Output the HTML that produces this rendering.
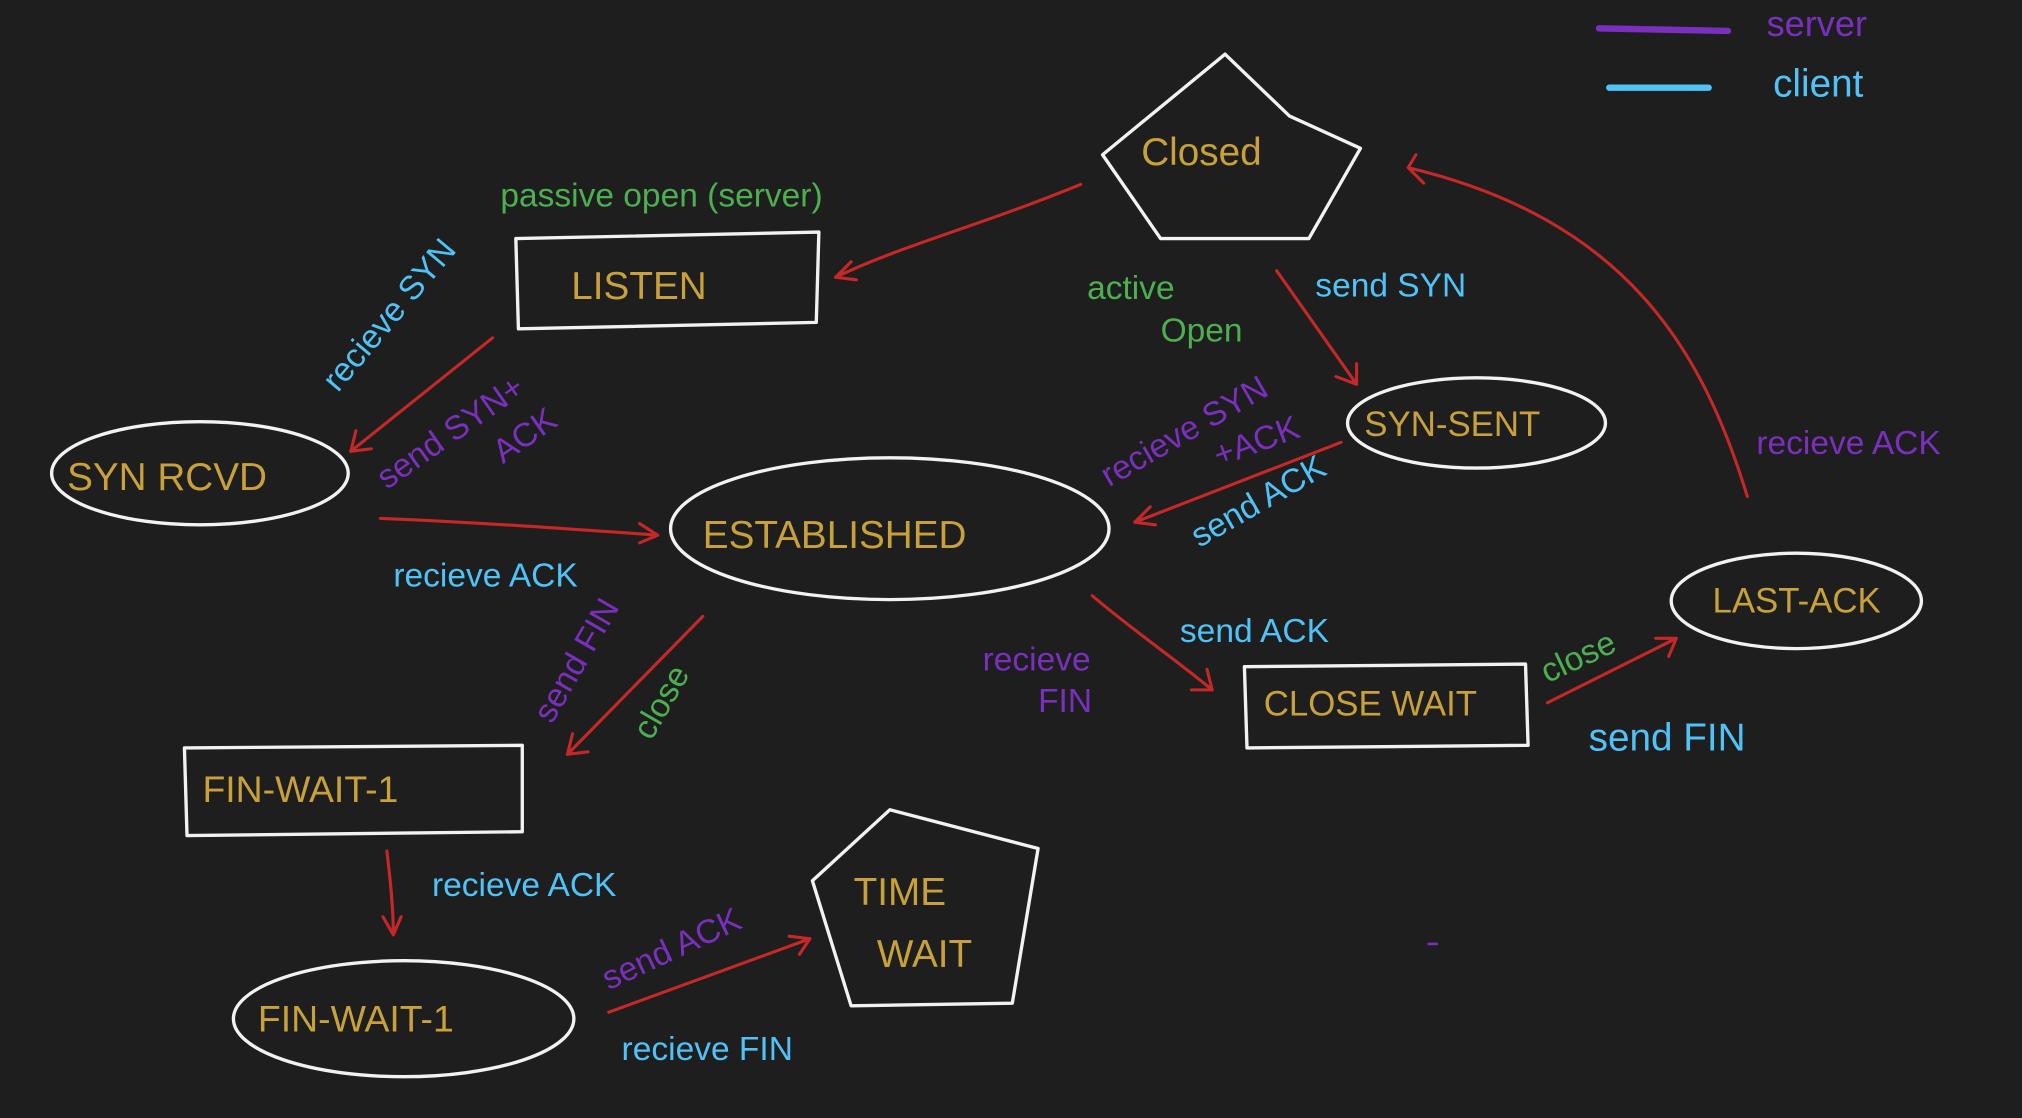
<!DOCTYPE html>
<html><head><meta charset="utf-8"><style>
html,body{margin:0;padding:0;background:#1e1e1e;width:2022px;height:1118px;overflow:hidden}
svg{display:block}
text{font-family:"Liberation Sans","DejaVu Sans",sans-serif}
.y{fill:#c9a13a;font-size:30px}
.g{fill:#4caf50;font-size:26px}
.b{fill:#4fc3f7;font-size:26px}
.p{fill:#7b2fbe;font-size:26px}
.w{fill:none;stroke:#f2f2f2;stroke-width:2.6;stroke-linejoin:round}
.r{fill:none;stroke:#c62828;stroke-width:2.4;stroke-linecap:round}
</style></head><body>
<svg width="2022" height="1118" viewBox="0 0 1568 867">
<rect width="1568" height="867" fill="#1e1e1e"/>
<!-- legend -->
<path d="M1240 22 L1340 24" stroke="#7b2fbe" stroke-width="5" stroke-linecap="round"/>
<text x="1370" y="28" class="p" style="font-size:28px">server</text>
<path d="M1248 68 L1325 68" stroke="#4fc3f7" stroke-width="5" stroke-linecap="round"/>
<text x="1375" y="75" class="b" style="font-size:30px">client</text>

<!-- Closed -->
<polygon class="w" points="855,120 950,42 1000,90 1055,115 1015,185 900,185"/>
<text x="885" y="128" class="y">Closed</text>

<text x="388" y="160" class="g">passive open (server)</text>
<polygon class="w" points="400,185 635,180 633,250 402,255"/>
<text x="443" y="232" class="y">LISTEN</text>
<path class="r" d="M838 143 C760 175 700 190 648 215 M648 215 l12 -12 M648 215 l16 2"/>

<text class="b" transform="translate(262,305) rotate(-50)">recieve SYN</text>
<path class="r" d="M382 262 L272 350 M272 350 l4 -16 M272 350 l16 -2"/>

<ellipse class="w" cx="155" cy="367" rx="115" ry="40"/>
<text x="52" y="380" class="y">SYN RCVD</text>

<text class="p" transform="translate(300,380) rotate(-35)">send SYN+</text>
<text class="p" transform="translate(390,360) rotate(-35)">ACK</text>
<path class="r" d="M295 402 C370 405 440 410 510 415 M510 415 l-14 -9 M510 415 l-14 6"/>
<text x="305" y="455" class="b">recieve ACK</text>

<ellipse class="w" cx="690" cy="410" rx="170" ry="55"/>
<text x="545" y="425" class="y">ESTABLISHED</text>

<text x="843" y="232" class="g">active</text>
<text x="900" y="265" class="g">Open</text>
<text x="1020" y="230" class="b">send SYN</text>
<path class="r" d="M990 210 L1052 298 M1052 298 l-16 -6 M1052 298 l0 -16"/>

<ellipse class="w" cx="1145" cy="328" rx="100" ry="35"/>
<text x="1058" y="338" class="y" style="font-size:27px">SYN-SENT</text>

<text class="p" transform="translate(860,378) rotate(-30)">recieve SYN</text>
<text class="p" transform="translate(945,362) rotate(-20)">+ACK</text>
<text class="b" transform="translate(930,425) rotate(-30)">send ACK</text>
<path class="r" d="M1040 343 L880 405 M880 405 l12 -12 M880 405 l16 2"/>

<text x="1362" y="352" class="p">recieve ACK</text>
<path class="r" d="M1355 385 C1320 270 1260 170 1092 130 M1092 130 l12 12 M1092 130 l6 -10"/>

<ellipse class="w" cx="1393" cy="466" rx="97" ry="37"/>
<text x="1328" y="475" class="y" style="font-size:27px">LAST-ACK</text>

<path class="r" d="M847 462 C880 490 910 510 940 535 M940 535 l-4 -16 M940 535 l-16 0"/>
<text x="915" y="498" class="b">send ACK</text>
<text x="762" y="520" class="p">recieve</text>
<text x="805" y="552" class="p">FIN</text>

<polygon class="w" points="965,517 1183,515 1185,578 967,580"/>
<text x="980" y="555" class="y" style="font-size:27px">CLOSE WAIT</text>

<text class="g" transform="translate(1200,530) rotate(-25)">close</text>
<path class="r" d="M1200 545 L1300 495 M1300 495 l-16 0 M1300 495 l-6 14"/>
<text x="1232" y="582" class="b" style="font-size:30px">send FIN</text>

<path class="r" d="M545 478 L440 585 M440 585 l4 -16 M440 585 l16 -2"/>
<text class="p" transform="translate(428,562) rotate(-60)">send FIN</text>
<text class="g" transform="translate(505,575) rotate(-60)">close</text>

<polygon class="w" points="143,580 405,578 405,645 145,648"/>
<text x="157" y="622" class="y" style="font-size:29px">FIN-WAIT-1</text>

<path class="r" d="M300 660 C303 685 305 705 305 725 M305 725 l-8 -14 M305 725 l6 -14"/>
<text x="335" y="695" class="b">recieve ACK</text>

<ellipse class="w" cx="313" cy="790" rx="132" ry="45"/>
<text x="200" y="800" class="y" style="font-size:29px">FIN-WAIT-1</text>

<text class="p" transform="translate(472,768) rotate(-25)">send ACK</text>
<path class="r" d="M472 785 L628 728 M628 728 l-16 -2 M628 728 l-8 12"/>
<text x="482" y="822" class="b">recieve FIN</text>

<polygon class="w" points="630,683 690,628 805,658 785,778 660,780"/>
<text x="662" y="702" class="y">TIME</text>
<text x="680" y="750" class="y">WAIT</text>

<path d="M1107 732 L1115 732" stroke="#7b2fbe" stroke-width="2"/>
</svg>
</body></html>
